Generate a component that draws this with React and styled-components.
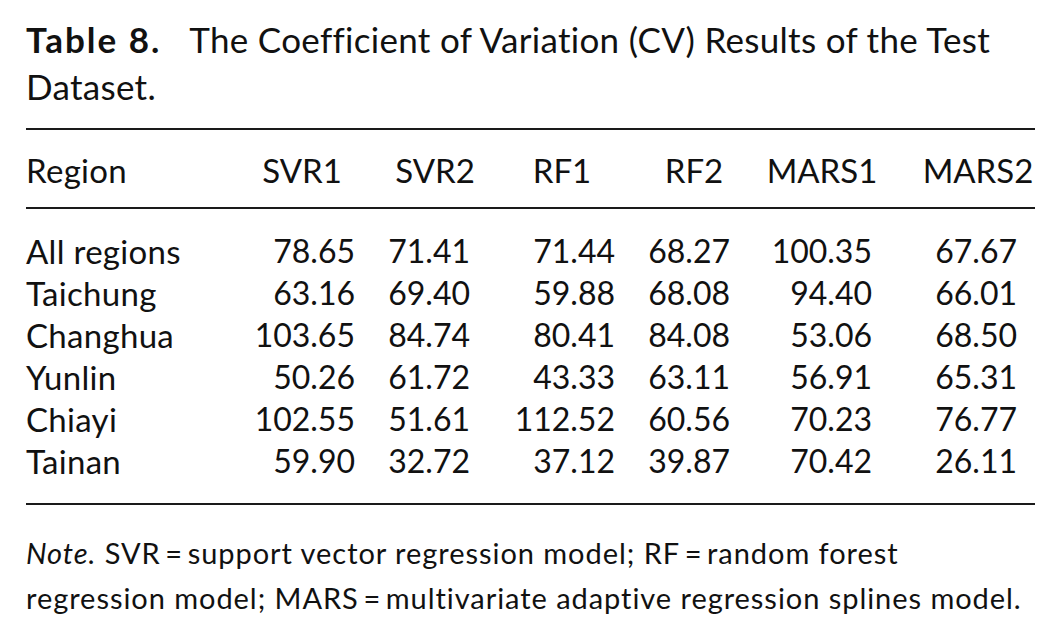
import React from "react";
import styled, { createGlobalStyle } from "styled-components";

const GlobalStyle = createGlobalStyle`
  html, body {
    margin: 0;
    padding: 0;
    background: #ffffff;
  }
  body {
    font-family: Lato, "Open Sans", "Noto Sans", sans-serif;
    color: #111111;
  }
`;

// column geometry: width of the track, padding for numbers, header centre offset
const columns = [
  { key: "svr1", label: "SVR1", width: 110, numPad: 5, headShift: -3 },
  { key: "svr2", label: "SVR2", width: 135, numPad: 25, headShift: 7.5 },
  { key: "rf1", label: "RF1", width: 125, numPad: 5, headShift: 4.5 },
  { key: "rf2", label: "RF2", width: 130, numPad: 20, headShift: 9 },
  { key: "mars1", label: "MARS1", width: 130, numPad: 8, headShift: 7 },
  { key: "mars2", label: "MARS2", width: 155, numPad: 18, headShift: 20.5 },
];

const rows = [
  ["All regions", "78.65", "71.41", "71.44", "68.27", "100.35", "67.67"],
  ["Taichung", "63.16", "69.40", "59.88", "68.08", "94.40", "66.01"],
  ["Changhua", "103.65", "84.74", "80.41", "84.08", "53.06", "68.50"],
  ["Yunlin", "50.26", "61.72", "43.33", "63.11", "56.91", "65.31"],
  ["Chiayi", "102.55", "51.61", "112.52", "60.56", "70.23", "76.77"],
  ["Tainan", "59.90", "32.72", "37.12", "39.87", "70.42", "26.11"],
];

const gridTemplate = `224px ${columns.map((c) => `${c.width}px`).join(" ")}`;

function App() {
  return (
    <Page>
      <GlobalStyle />
      <Caption>
        <CaptionLabel>Table 8.</CaptionLabel>
        The Coefficient of Variation (CV) Results of the Test
        <br />
        Dataset.
      </Caption>

      <Rule />
      <HeadRow>
        <RegionCell>Region</RegionCell>
        {columns.map((c) => (
          <HeadCell key={c.key} $shift={c.headShift}>
            {c.label}
          </HeadCell>
        ))}
      </HeadRow>
      <Rule />

      <Body>
        {rows.map((r) => (
          <DataRow key={r[0]}>
            <RegionCell>{r[0]}</RegionCell>
            {r.slice(1).map((v, i) => (
              <NumCell key={columns[i].key} $pad={columns[i].numPad}>
                {v}
              </NumCell>
            ))}
          </DataRow>
        ))}
      </Body>
      <Rule />

      <Note>
        <em>Note.</em> SVR&thinsp;=&thinsp;support vector regression model;
        RF&thinsp;=&thinsp;random forest
        <br />
        regression model; MARS&thinsp;=&thinsp;multivariate adaptive regression
        splines model.
      </Note>
    </Page>
  );
}

const Page = styled.div`
  width: 1009px;
  padding: 16px 0 0 26px;
`;

const Caption = styled.div`
  font-size: 35px;
  line-height: 47px;
  letter-spacing: 0.3px;
  white-space: nowrap;
  margin-bottom: 18px;
`;

const CaptionLabel = styled.span`
  font-weight: 700;
  letter-spacing: 2px;
  margin-right: 28px;
`;

const Rule = styled.div`
  height: 2px;
  background: #1a1a1a;
`;

const RowBase = styled.div`
  display: grid;
  grid-template-columns: ${gridTemplate};
  font-size: 33px;
  line-height: 42px;
  white-space: nowrap;
`;

const HeadRow = styled(RowBase)`
  padding: 19px 0 16px;
`;

const Body = styled.div`
  padding: 21px 0 21px;
`;

const DataRow = styled(RowBase)``;

const RegionCell = styled.div`
  text-align: left;
  letter-spacing: 0.3px;
`;

const HeadCell = styled.div`
  text-align: center;
  padding-left: ${(p) => Math.max(0, p.$shift * 2)}px;
  padding-right: ${(p) => Math.max(0, -p.$shift * 2)}px;
`;

const NumCell = styled.div`
  text-align: right;
  font-size: 32px;
  padding-right: ${(p) => p.$pad}px;
`;

const Note = styled.div`
  margin-top: 25px;
  font-size: 29px;
  line-height: 45px;
  letter-spacing: 0.95px;
  white-space: nowrap;

  em {
    font-style: italic;
  }
`;

export default App;
